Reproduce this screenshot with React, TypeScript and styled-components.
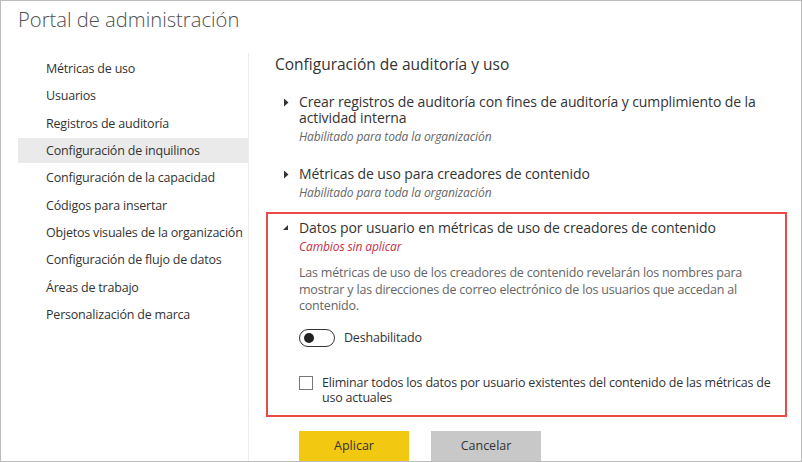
import React, { useState } from "react";
import styled, { createGlobalStyle } from "styled-components";

const GlobalStyle = createGlobalStyle`
  html, body { margin: 0; padding: 0; background: #fff; }
  body { font-family: "Segoe UI", "Open Sans", "Noto Sans", sans-serif; color: #333; }
  * { box-sizing: border-box; }
`;

const Frame = styled.div`
  width: 802px;
  height: 462px;
  border: 1px solid #bcbcbc;
  display: flex;
  flex-direction: column;
  overflow: hidden;
`;

const Header = styled.header`
  height: 52px;
  flex: none;
  padding: 4px 0 0 17px;
`;

const Title = styled.h1`
  margin: 0;
  font-weight: 300;
  font-size: 20.2px;
  line-height: 28px;
  color: #505050;
`;

const Body = styled.div`
  flex: 1;
  display: flex;
  min-height: 0;
`;

const Sidebar = styled.nav`
  width: 248px;
  flex: none;
  padding: 3px 0 0 17px;
  border-right: 1px solid #ececec;
  display: flex;
  flex-direction: column;
  gap: 2.33px;
`;

const NavItem = styled.div<{ $active?: boolean }>`
  height: 25px;
  display: flex;
  align-items: center;
  padding-left: 28px;
  font-size: 12.5px;
  letter-spacing: -0.2px;
  white-space: nowrap;
  color: #333;
  background: ${(p) => (p.$active ? "#eaeaea" : "transparent")};
`;

const Main = styled.main`
  flex: 1;
  padding: 0 14px 0 17px;
  display: flex;
  flex-direction: column;
`;

const SectionTitle = styled.h2`
  margin: 0 0 17px 9px;
  font-weight: 400;
  font-size: 15.5px;
  line-height: 22px;
  color: #333;
`;

const Setting = styled.section<{ $highlight?: boolean; $gap?: number }>`
  display: flex;
  border: 2px solid ${(p) => (p.$highlight ? "#e84a4a" : "transparent")};
  padding: ${(p) => (p.$highlight ? "6px 0 10px 0" : "0")};
  margin-top: ${(p) => p.$gap ?? 0}px;
`;

const CaretCell = styled.div`
  width: 31px;
  flex: none;
  display: flex;
  justify-content: center;
  padding-left: 4px;
  padding-top: 4px;
`;

const Content = styled.div`
  flex: 1;
  display: flex;
  flex-direction: column;
`;

const SettingTitle = styled.div`
  font-size: 14px;
  letter-spacing: -0.1px;
  line-height: 16px;
  color: #333;
  padding-right: 8px;
`;

const Note = styled.div<{ $warn?: boolean }>`
  font-size: 12px;
  line-height: 16px;
  margin-top: 3px;
  font-style: italic;
  letter-spacing: -0.1px;
  color: ${(p) => (p.$warn ? "#c4314b" : "#666")};
`;

const Description = styled.p`
  margin: 10px 0 0 0;
  max-width: 448px;
  font-size: 12.5px;
  letter-spacing: -0.2px;
  line-height: 16.5px;
  color: #666;
`;

const ToggleRow = styled.label`
  display: flex;
  align-items: center;
  gap: 9px;
  margin-top: 14px;
  font-size: 12.5px;
  letter-spacing: -0.2px;
  color: #333;
`;

const Track = styled.span`
  width: 36px;
  height: 18px;
  border: 1.3px solid #333;
  border-radius: 9px;
  display: flex;
  align-items: center;
  padding-left: 4px;
`;

const Knob = styled.span`
  width: 10px;
  height: 10px;
  border-radius: 50%;
  background: #222;
`;

const CheckRow = styled.label`
  display: flex;
  align-items: flex-start;
  gap: 9px;
  margin-top: 28px;
  font-size: 12.5px;
  letter-spacing: -0.2px;
  line-height: 15px;
  color: #333;
  padding-right: 6px;
`;

const Box = styled.span`
  width: 14px;
  height: 14px;
  flex: none;
  border: 1px solid #777;
  margin-top: 1px;
`;

const Actions = styled.div`
  display: flex;
  gap: 22px;
  margin: 14px 0 0 33px;
`;

const Button = styled.button<{ $primary?: boolean }>`
  width: 110px;
  height: 30px;
  border: none;
  padding: 0;
  font-family: inherit;
  font-size: 12.5px;
  color: #333;
  background: ${(p) => (p.$primary ? "#f2c811" : "#c8c8c8")};
`;

const Caret = ({ open }: { open?: boolean }) =>
  open ? (
    <svg width="7" height="7" viewBox="0 0 7 7">
      <path d="M6 1 L6 6 L1 6 Z" fill="#333" />
    </svg>
  ) : (
    <svg width="6" height="9" viewBox="0 0 6 9">
      <path d="M1 0.5 L5.5 4.5 L1 8.5 Z" fill="#333" />
    </svg>
  );

const navItems = [
  "Métricas de uso",
  "Usuarios",
  "Registros de auditoría",
  "Configuración de inquilinos",
  "Configuración de la capacidad",
  "Códigos para insertar",
  "Objetos visuales de la organización",
  "Configuración de flujo de datos",
  "Áreas de trabajo",
  "Personalización de marca",
];

export default function App() {
  const [active] = useState(3);
  return (
    <>
      <GlobalStyle />
      <Frame>
        <Header>
          <Title>Portal de administración</Title>
        </Header>
        <Body>
          <Sidebar>
            {navItems.map((t, i) => (
              <NavItem key={t} $active={i === active}>
                {t}
              </NavItem>
            ))}
          </Sidebar>
          <Main>
            <SectionTitle>Configuración de auditoría y uso</SectionTitle>
            <Setting>
              <CaretCell>
                <Caret />
              </CaretCell>
              <Content>
                <SettingTitle>
                  Crear registros de auditoría con fines de auditoría y cumplimiento de la actividad interna
                </SettingTitle>
                <Note>Habilitado para toda la organización</Note>
              </Content>
            </Setting>
            <Setting $gap={17}>
              <CaretCell>
                <Caret />
              </CaretCell>
              <Content>
                <SettingTitle>Métricas de uso para creadores de contenido</SettingTitle>
                <Note>Habilitado para toda la organización</Note>
              </Content>
            </Setting>
            <Setting $highlight $gap={9}>
              <CaretCell>
                <Caret open />
              </CaretCell>
              <Content>
                <SettingTitle>Datos por usuario en métricas de uso de creadores de contenido</SettingTitle>
                <Note $warn>Cambios sin aplicar</Note>
                <Description>
                  Las métricas de uso de los creadores de contenido revelarán los nombres para mostrar y las
                  direcciones de correo electrónico de los usuarios que accedan al contenido.
                </Description>
                <ToggleRow>
                  <Track>
                    <Knob />
                  </Track>
                  Deshabilitado
                </ToggleRow>
                <CheckRow>
                  <Box />
                  <span>
                    Eliminar todos los datos por usuario existentes del contenido de las métricas de uso actuales
                  </span>
                </CheckRow>
              </Content>
            </Setting>
            <Actions>
              <Button $primary>Aplicar</Button>
              <Button>Cancelar</Button>
            </Actions>
          </Main>
        </Body>
      </Frame>
    </>
  );
}
